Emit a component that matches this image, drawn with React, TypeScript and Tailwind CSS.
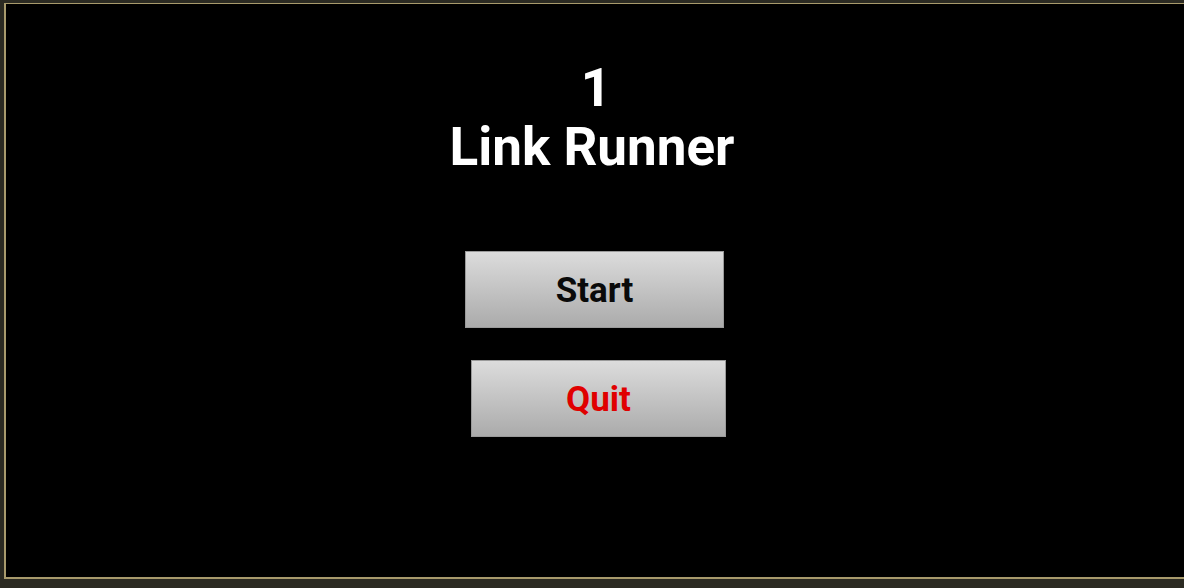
export default function App() {
  return (
    <div className="h-[588px] w-[1184px] overflow-hidden bg-[#2b2a22] pt-[3px] pl-[4px] pb-[9px]" style={{ fontFamily: "Roboto, 'Liberation Sans', sans-serif" }}>
      <div className="flex h-full flex-col border-t border-l-2 border-b-2 border-[#a89a6c] bg-black">
        <div className="mt-[55px] w-full pr-[6px] text-center text-[53px] font-bold leading-[59px] text-white">
          <div className="pl-[8px]">1</div>
          <div>Link Runner</div>
        </div>
        <button
          type="button"
          className="mt-[74px] ml-[459px] h-[77px] w-[259px] border border-[#9a9a9a] bg-gradient-to-b from-[#dcdcdc] to-[#ababab] pt-[4px] text-[35px] font-bold text-[#0a0a0a]"
        >
          Start
        </button>
        <button
          type="button"
          className="mt-[32px] ml-[465px] h-[77px] w-[255px] border border-[#9a9a9a] bg-gradient-to-b from-[#dcdcdc] to-[#ababab] pt-[4px] text-[35px] font-bold text-[#e00000]"
        >
          Quit
        </button>
      </div>
    </div>
  );
}
